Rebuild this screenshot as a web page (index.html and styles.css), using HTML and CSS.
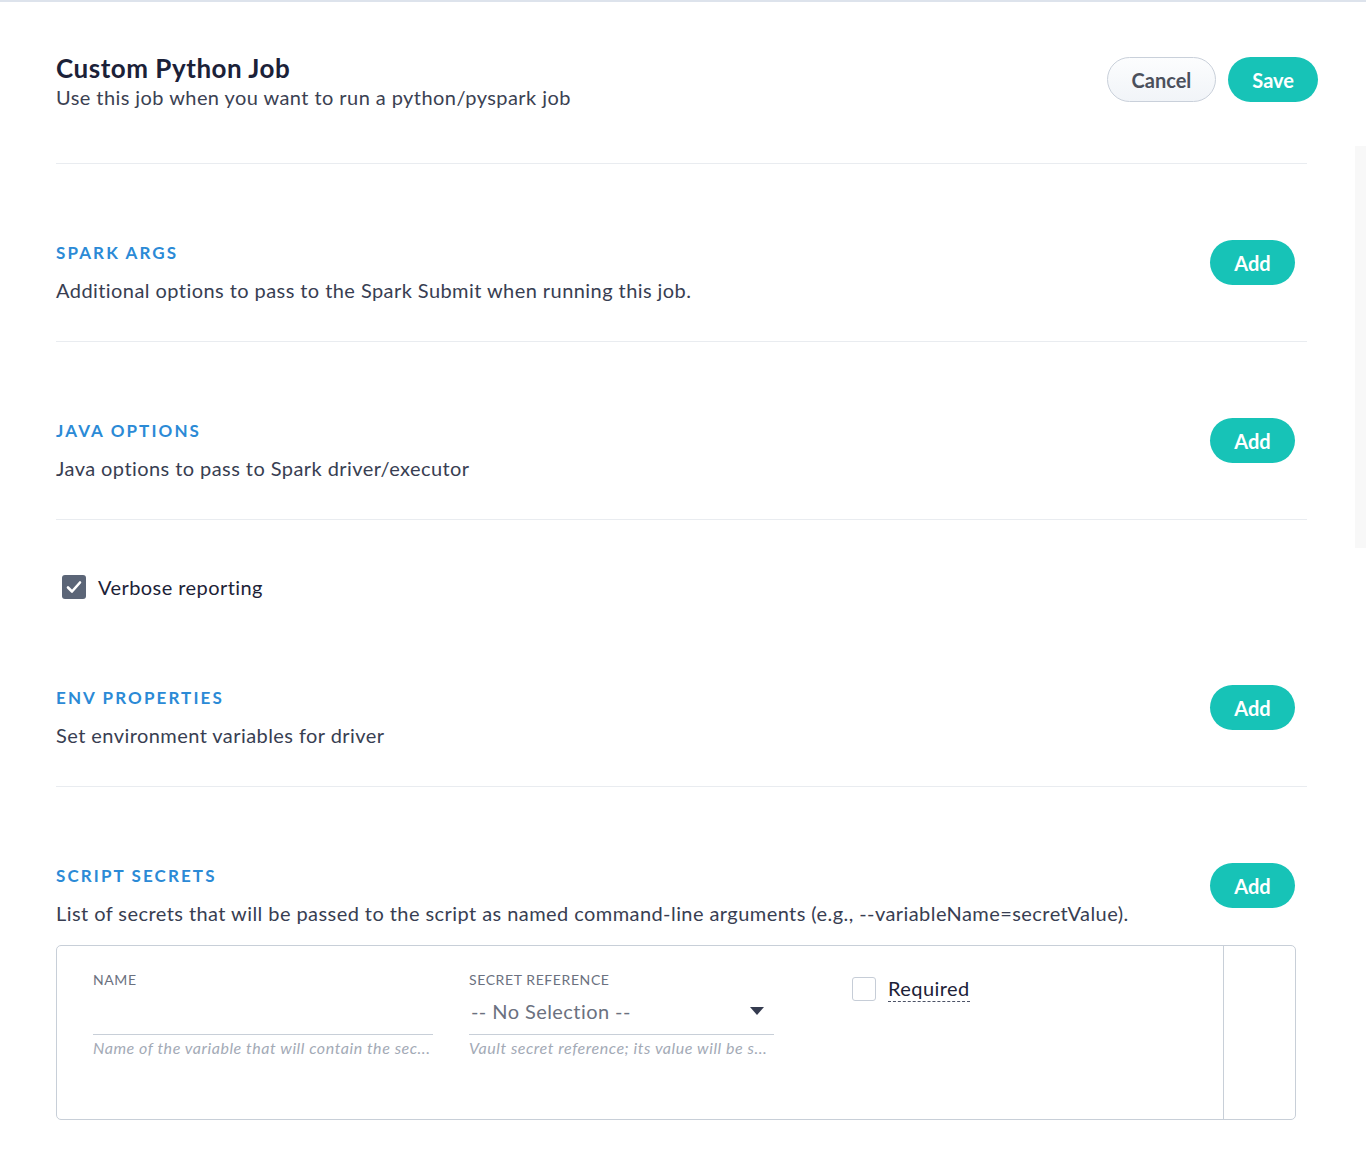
FILE: index.html
```html
<!DOCTYPE html>
<html lang="en">
<head>
    <meta charset="UTF-8">
    <title>Custom Python Job</title>
    <link rel="stylesheet" href="styles.css">
</head>
<body>
    <div class="scroll-track"></div>
    <div class="page">
        <header class="page-head">
            <div>
                <h1>Custom Python Job</h1>
                <p class="subtitle">Use this job when you want to run a python/pyspark job</p>
            </div>
            <div class="actions">
                <button class="btn btn-ghost">Cancel</button>
                <button class="btn btn-teal">Save</button>
            </div>
        </header>

        <section class="section">
            <div class="section-row">
                <div class="section-text">
                    <h2>SPARK ARGS</h2>
                    <p>Additional options to pass to the Spark Submit when running this job.</p>
                </div>
                <button class="btn btn-teal btn-add">Add</button>
            </div>
        </section>

        <section class="section">
            <div class="section-row">
                <div class="section-text">
                    <h2>JAVA OPTIONS</h2>
                    <p>Java options to pass to Spark driver/executor</p>
                </div>
                <button class="btn btn-teal btn-add">Add</button>
            </div>
        </section>

        <div class="verbose">
            <span class="check checked">
                <svg width="20" height="20" viewBox="0 0 20 20"><path d="M4 10.5 L8 14.5 L16 5.5" fill="none" stroke="#fff" stroke-width="2.6" stroke-linecap="round" stroke-linejoin="round"/></svg>
            </span>
            <span class="check-label">Verbose reporting</span>
        </div>

        <section class="section">
            <div class="section-row">
                <div class="section-text">
                    <h2>ENV PROPERTIES</h2>
                    <p>Set environment variables for driver</p>
                </div>
                <button class="btn btn-teal btn-add">Add</button>
            </div>
        </section>

        <section class="section last">
            <div class="section-row">
                <div class="section-text">
                    <h2>SCRIPT SECRETS</h2>
                    <p>List of secrets that will be passed to the script as named command-line arguments (e.g., --variableName=secretValue).</p>
                </div>
                <button class="btn btn-teal btn-add">Add</button>
            </div>

            <div class="secret-box">
                <div class="secret-fields">
                    <div class="field field-name">
                        <label>NAME</label>
                        <div class="input"></div>
                        <div class="help">Name of the variable that will contain the sec...</div>
                    </div>
                    <div class="field field-ref">
                        <label>SECRET REFERENCE</label>
                        <div class="input select">
                            <span>-- No Selection --</span>
                            <svg width="14" height="8" viewBox="0 0 14 8"><path d="M0 0 H14 L7 8 Z" fill="#343b4f"/></svg>
                        </div>
                        <div class="help">Vault secret reference; its value will be s...</div>
                    </div>
                    <div class="field-required">
                        <span class="check"></span>
                        <span class="required-label">Required</span>
                    </div>
                </div>
                <div class="secret-side"></div>
            </div>
        </section>
    </div>
</body>
</html>
```

FILE: styles.css
```css
body {
    margin: 0;
    padding: 0;
    border-top: 2px solid #dde3ec;
    font-family: Lato, "Open Sans", sans-serif;
    letter-spacing: 0.027em;
    color: #383e52;
    background-color: #fff;
}
.scroll-track {
    position: absolute;
    top: 146px;
    right: 0;
    width: 11px;
    height: 402px;
    background-color: #f8f8f8;
}
.page {
    padding: 51px 59px 40px 56px;
}
.page-head {
    display: flex;
    justify-content: space-between;
    align-items: flex-start;
    padding-bottom: 54px;
    border-bottom: 1px solid #e9ecf0;
}
.page-head h1 {
    margin: 0;
    font-size: 26px;
    line-height: 30px;
    font-weight: 700;
    letter-spacing: 0.02em;
    color: #1b2138;
}
.subtitle {
    margin: 2px 0 0;
    font-size: 20px;
    line-height: 24px;
    color: #3b4152;
}
.actions {
    display: flex;
    gap: 12px;
    margin-top: 4px;
    margin-right: -11px;
}
.btn {
    height: 45px;
    border-radius: 23px;
    font-family: Lato, sans-serif;
    font-size: 20px;
    font-weight: 700;
    padding: 0 24px;
    cursor: pointer;
}
.btn-ghost {
    background: linear-gradient(#fcfdfe, #f1f4f8);
    border: 1px solid #c9d0da;
    color: #4b505c;
}
.btn-teal {
    background-color: #17c3b7;
    border: none;
    color: #fff;
}
.btn-add {
    width: 85px;
    padding: 0;
    flex-shrink: 0;
}
.section {
    padding: 76px 12px 39px 0;
    border-bottom: 1px solid #e9ecf0;
}
.section.last {
    border-bottom: none;
}
.section-row {
    display: flex;
    justify-content: space-between;
    align-items: flex-start;
}
.section-text {
    margin-top: 3px;
}
.section h2 {
    margin: 0;
    font-size: 17px;
    line-height: 20px;
    font-weight: 700;
    letter-spacing: 2.1px;
    color: #2b8ad6;
}
.section-text p {
    margin: 15px 0 0;
    font-size: 20px;
    line-height: 24px;
    color: #383e52;
}
.verbose {
    display: flex;
    align-items: center;
    padding: 55px 6px 10px;
}
.check {
    box-sizing: border-box;
    width: 24px;
    height: 24px;
    border-radius: 3px;
    border: 1px solid #c6cdd7;
    background-color: #fff;
    display: flex;
    align-items: center;
    justify-content: center;
    flex-shrink: 0;
}
.check.checked {
    border: none;
    background-color: #5b6577;
}
.check-label {
    margin-left: 12px;
    font-size: 20px;
    color: #1c2237;
}
.secret-box {
    display: flex;
    margin: 20px -1px 0 0;
    border: 1px solid #c8cfd8;
    border-radius: 5px;
    height: 173px;
}
.secret-fields {
    flex: 1;
    display: flex;
    align-items: flex-start;
    padding: 25px 0 0 36px;
    border-right: 1px solid #c8cfd8;
}
.secret-side {
    width: 71px;
}
.field label {
    display: block;
    font-size: 14px;
    line-height: 17px;
    letter-spacing: 0.6px;
    color: #6b7180;
}
.field-name {
    width: 340px;
    margin-right: 36px;
}
.field-ref {
    width: 305px;
    margin-right: 78px;
}
.input {
    box-sizing: border-box;
    height: 47px;
    border-bottom: 1px solid #c8cfd8;
}
.select {
    display: flex;
    align-items: center;
    justify-content: space-between;
    padding: 0 10px 0 2px;
    font-size: 20px;
    color: #6b7180;
}
.help {
    margin-top: 4px;
    font-size: 16px;
    line-height: 18px;
    letter-spacing: 0.55px;
    font-style: italic;
    color: #a3aab6;
    white-space: nowrap;
}
.field-required {
    display: flex;
    align-items: center;
    margin-top: 5px;
}
.required-label {
    margin-left: 12px;
    font-size: 20px;
    line-height: 24px;
    color: #1c2237;
    border-bottom: 1px dashed #4b5266;
    padding-bottom: 1px;
}
```
